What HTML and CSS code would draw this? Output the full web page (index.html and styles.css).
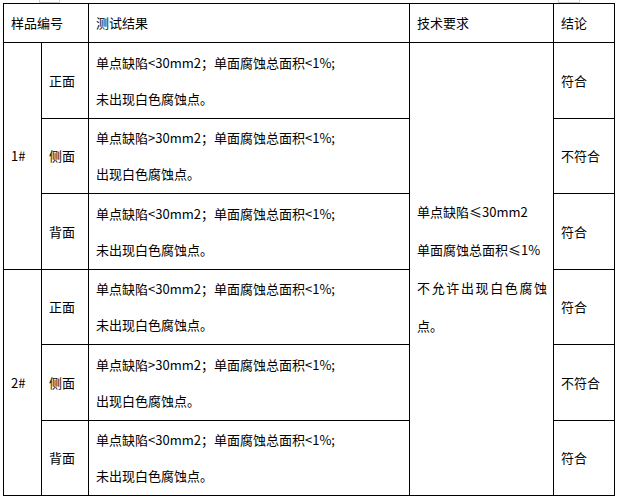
FILE: index.html
```html
<!DOCTYPE html>
<html lang="zh-CN">
<head>
<meta charset="utf-8">
<title>测试结果</title>
<link rel="stylesheet" href="styles.css">
</head>
<body>
<div class="sheet">
  <span class="handle handle-left"></span>
  <span class="handle handle-right"></span>
  <table class="grid">
    <colgroup>
      <col class="c-id"><col class="c-face"><col class="c-result"><col class="c-req"><col class="c-verdict">
    </colgroup>
    <tr class="head">
      <td colspan="2">样品编号</td>
      <td>测试结果</td>
      <td>技术要求</td>
      <td>结论</td>
    </tr>
    <tr class="row-a">
      <td rowspan="3">1#</td>
      <td>正面</td>
      <td class="result">单点缺陷&lt;30mm2；单面腐蚀总面积&lt;1%;<br>未出现白色腐蚀点。</td>
      <td rowspan="6" class="req">单点缺陷≤30mm2<br>单面腐蚀总面积≤1%<span class="spread">不允许出现白色腐蚀</span>点。</td>
      <td>符合</td>
    </tr>
    <tr class="row-b">
      <td>侧面</td>
      <td class="result">单点缺陷&gt;30mm2；单面腐蚀总面积&lt;1%;<br>出现白色腐蚀点。</td>
      <td>不符合</td>
    </tr>
    <tr class="row-a">
      <td>背面</td>
      <td class="result">单点缺陷&lt;30mm2；单面腐蚀总面积&lt;1%;<br>未出现白色腐蚀点。</td>
      <td>符合</td>
    </tr>
    <tr class="row-b">
      <td rowspan="3">2#</td>
      <td>正面</td>
      <td class="result">单点缺陷&lt;30mm2；单面腐蚀总面积&lt;1%;<br>未出现白色腐蚀点。</td>
      <td>符合</td>
    </tr>
    <tr class="row-a">
      <td>侧面</td>
      <td class="result">单点缺陷&gt;30mm2；单面腐蚀总面积&lt;1%;<br>出现白色腐蚀点。</td>
      <td>不符合</td>
    </tr>
    <tr class="row-b">
      <td>背面</td>
      <td class="result">单点缺陷&lt;30mm2；单面腐蚀总面积&lt;1%;<br>未出现白色腐蚀点。</td>
      <td>符合</td>
    </tr>
  </table>
</div>
</body>
</html>
```
FILE: styles.css
```css
html, body {
  margin: 0;
  padding: 0;
  background: #ffffff;
}

body {
  font-family: "Noto Sans CJK SC", "Microsoft YaHei", sans-serif;
  font-size: 13px;
  color: #000000;
}

.sheet {
  position: relative;
  padding: 3px 0 0 3px;
}

.handle {
  position: absolute;
  top: -1px;
  height: 2px;
  border: 1px solid #cfcfcf;
}

.handle-left {
  left: 39px;
  width: 19px;
}

.handle-right {
  left: 558px;
  width: 20px;
}

.grid {
  border-collapse: collapse;
  table-layout: fixed;
  width: 612px;
}

.c-id { width: 38px; }
.c-face { width: 47px; }
.c-result { width: 321px; }
.c-req { width: 144px; }
.c-verdict { width: 61px; }

.grid td {
  border: 1px solid #000000;
  padding: 0 6px 0 7px;
  vertical-align: middle;
  line-height: 18px;
  white-space: nowrap;
}

.head td {
  height: 38px;
}

.row-a td {
  height: 75px;
}

.row-b td {
  height: 74px;
}

.grid td.result {
  line-height: 36px;
}

.grid td.req {
  line-height: 38px;
  white-space: normal;
}

.spread {
  display: block;
  text-align: justify;
  text-align-last: justify;
}
```
